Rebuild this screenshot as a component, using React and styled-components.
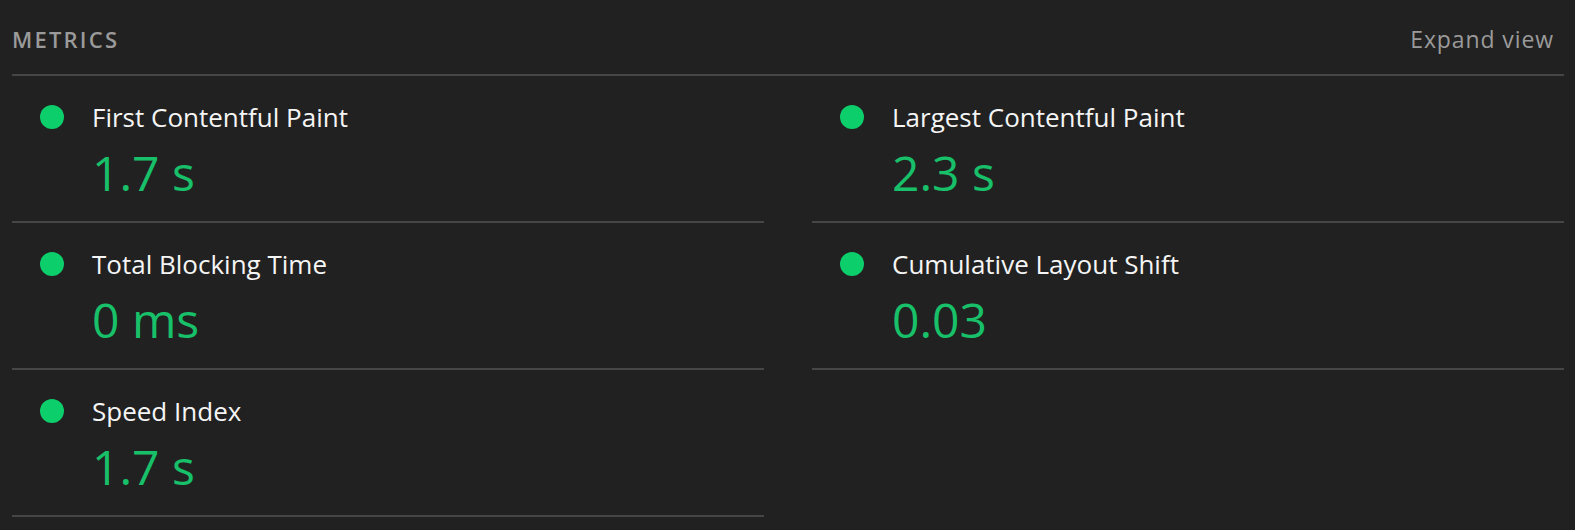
import React from 'react';
import styled, { createGlobalStyle } from 'styled-components';

const metrics = [
  { title: 'First Contentful Paint', value: '1.7 s' },
  { title: 'Largest Contentful Paint', value: '2.3 s' },
  { title: 'Total Blocking Time', value: '0 ms' },
  { title: 'Cumulative Layout Shift', value: '0.03' },
  { title: 'Speed Index', value: '1.7 s' },
];

const App = () => {
  return (
    <>
      <GlobalStyle />
      <Section>
        <Header>
          <Heading>Metrics</Heading>
          <ExpandToggle>Expand view</ExpandToggle>
        </Header>
        <MetricGrid>
          {metrics.map((m) => (
            <Metric key={m.title}>
              <Dot />
              <MetricBody>
                <MetricTitle>{m.title}</MetricTitle>
                <MetricValue>{m.value}</MetricValue>
              </MetricBody>
            </Metric>
          ))}
        </MetricGrid>
      </Section>
    </>
  );
};

export default App;

const GlobalStyle = createGlobalStyle`
  html, body {
    margin: 0;
    background: #212121;
  }
  body {
    font-family: "Open Sans", "Noto Sans", sans-serif;
    -webkit-font-smoothing: antialiased;
  }
`;

const Section = styled.div`
  padding: 0 11px 0 12px;
  min-height: 530px;
  box-sizing: border-box;
`;

const Header = styled.div`
  display: flex;
  align-items: center;
  justify-content: space-between;
  height: 74px;
  padding-right: 18px;
  padding-top: 10px;
  box-sizing: border-box;
`;

const Heading = styled.div`
  font-size: 22px;
  font-weight: 600;
  letter-spacing: 2.2px;
  text-transform: uppercase;
  color: #9a9a9a;
  margin-top: -6px;
`;

const ExpandToggle = styled.button`
  background: none;
  border: none;
  padding: 0;
  font-family: inherit;
  font-size: 23px;
  letter-spacing: 0.9px;
  color: #9a9a9a;
  cursor: pointer;
  margin-top: -6px;
  margin-right: -8px;
`;

const MetricGrid = styled.div`
  display: grid;
  grid-template-columns: 1fr 1fr;
  column-gap: 48px;
  border-top: 2px solid #464646;
`;

const Metric = styled.div`
  display: flex;
  align-items: flex-start;
  height: 147px;
  box-sizing: border-box;
  padding: 29px 0 0 28px;
  border-bottom: 2px solid #464646;
`;

const Dot = styled.span`
  flex: none;
  width: 24px;
  height: 24px;
  border-radius: 50%;
  background: #0cce6b;
  margin-right: 28px;
`;

const MetricBody = styled.div`
  display: flex;
  flex-direction: column;
`;

const MetricTitle = styled.div`
  font-size: 26px;
  line-height: 24px;
  color: #f5f5f5;
`;

const MetricValue = styled.div`
  font-size: 48px;
  line-height: 60px;
  margin-top: 14px;
  color: #18c069;
`;
